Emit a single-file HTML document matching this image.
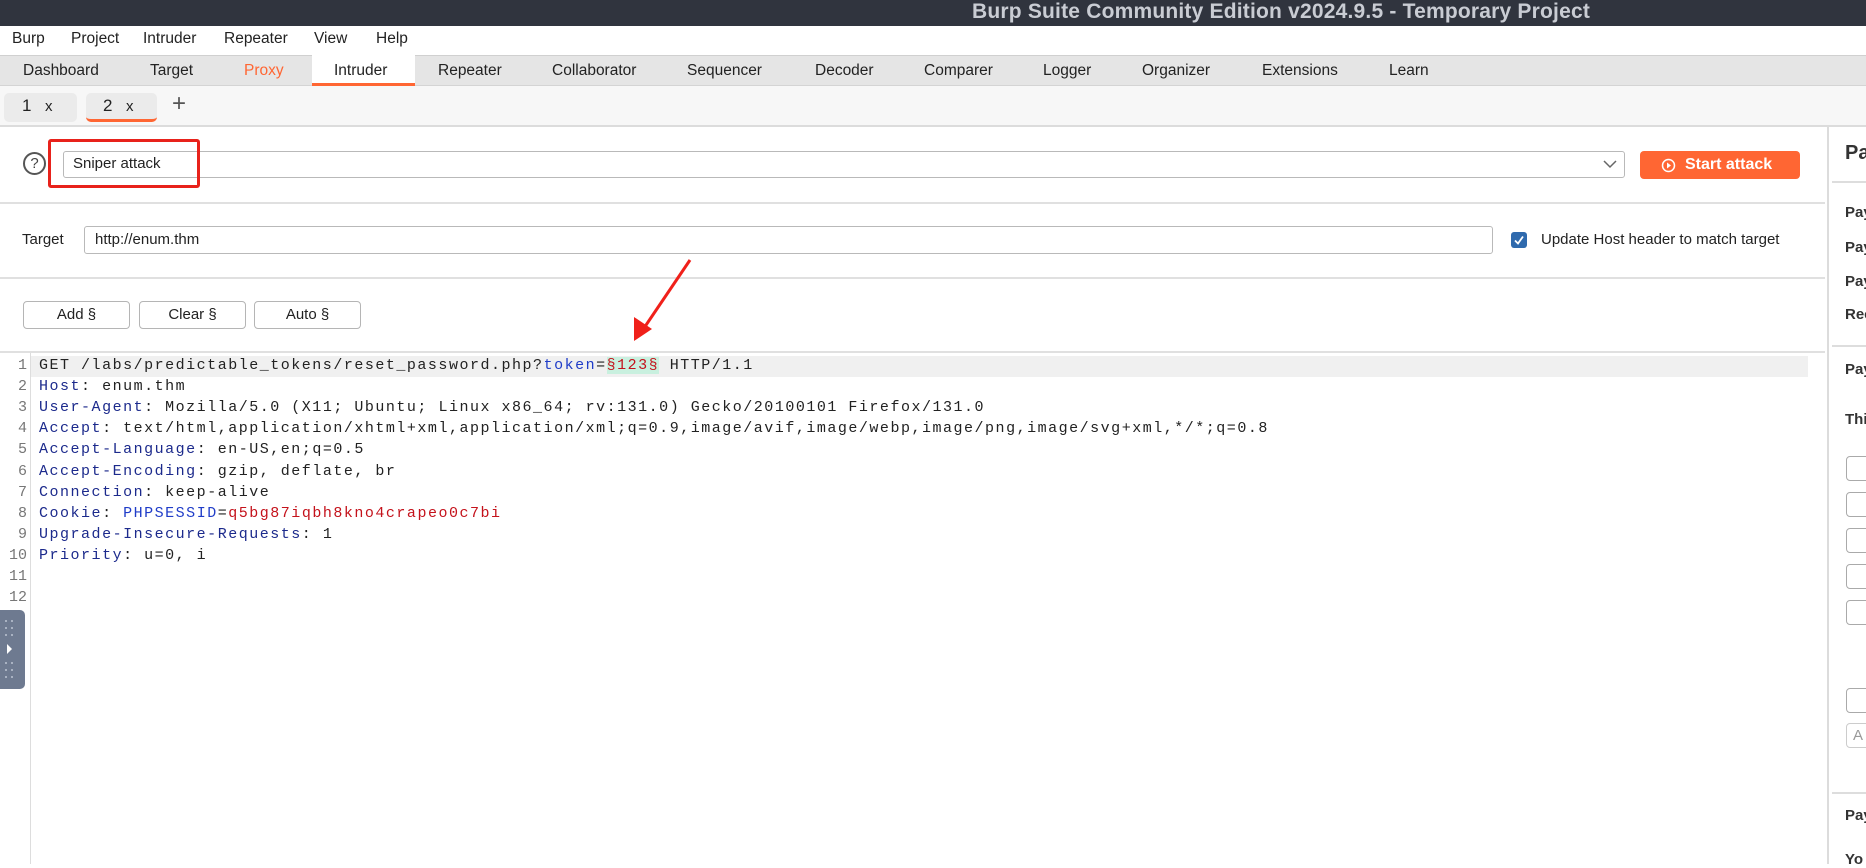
<!DOCTYPE html>
<html><head><meta charset="utf-8"><style>
*{margin:0;padding:0;box-sizing:border-box}
body{width:1866px;height:864px;position:relative;overflow:hidden;background:#fff;font-family:"Liberation Sans",sans-serif;color:#222;font-size:16px}
.a{position:absolute;white-space:nowrap}
.title{left:0;top:0;width:1866px;height:26px;background:#30343e}
.title span{position:absolute;left:972px;top:0;font-size:21px;font-weight:bold;color:#c9ccd3;line-height:23px;letter-spacing:0.2px}
.menu span{position:absolute;top:30px;font-size:15.5px}
.tabs{left:0;top:55px;width:1866px;height:31px;background:#e5e5e5;border-top:1px solid #d0d0d0;border-bottom:1px solid #d4d4d4}
.tabs span{position:absolute;top:6px;font-size:15.5px}
.sub{left:0;top:86px;width:1866px;height:41px;background:#f7f7f7;border-bottom:2px solid #dcdcdc}
.hr{height:2px;background:#e0e0e0}
.box{border:1px solid #b9b9b9;border-radius:3px;background:#fff}
.btn{border:1px solid #b5b5b5;border-radius:4px;background:#fff;text-align:center;line-height:26px;font-size:15px}
.code{left:0;top:355px;font-family:"Liberation Mono",monospace;font-size:15px;letter-spacing:1.51px;line-height:21.1px}
.ln{position:absolute;left:0;width:27px;text-align:right;color:#777;letter-spacing:0}
.tx{position:absolute;left:39px}
.k{color:#1c2a8c}.r{color:#c4121b}.b{color:#1f3cc8}
.rp span{position:absolute;left:1845px;font-size:15px;font-weight:bold;color:#333}
.rb{position:absolute;left:1846px;width:30px;height:25px;border:1px solid #aaa;border-radius:4px;background:#fff}
</style></head><body>
<div class="a title"><span>Burp Suite Community Edition v2024.9.5 - Temporary Project</span></div>
<div class="menu">
<span class="a" style="left:12px">Burp</span><span class="a" style="left:71px">Project</span><span class="a" style="left:143px">Intruder</span><span class="a" style="left:224px">Repeater</span><span class="a" style="left:314px">View</span><span class="a" style="left:376px">Help</span></div>
<div class="a tabs">
<div class="a" style="left:312px;top:-1px;width:103px;height:31px;background:#fff;border-bottom:3px solid #ff6633"></div>
<span style="left:23px">Dashboard</span><span style="left:150px">Target</span><span style="left:244px;color:#ff6633">Proxy</span><span style="left:334px">Intruder</span><span style="left:438px">Repeater</span><span style="left:552px">Collaborator</span><span style="left:687px">Sequencer</span><span style="left:815px">Decoder</span><span style="left:924px">Comparer</span><span style="left:1043px">Logger</span><span style="left:1142px">Organizer</span><span style="left:1262px">Extensions</span><span style="left:1389px">Learn</span></div>
<div class="a sub">
<div class="a" style="left:4px;top:7px;width:73px;height:29px;background:#ebebeb;border-radius:5px"></div>
<span class="a" style="left:22px;top:10px;font-size:17px">1</span><span class="a" style="left:45px;top:12px;font-size:15px">x</span>
<div class="a" style="left:86px;top:7px;width:71px;height:29px;background:#ebebeb;border-radius:5px;border-bottom:3px solid #ff6633"></div>
<span class="a" style="left:103px;top:10px;font-size:17px">2</span><span class="a" style="left:126px;top:12px;font-size:15px">x</span>
<span class="a" style="left:172px;top:4px;font-size:24px;color:#555">+</span></div>
<div class="a" style="left:1827px;top:127px;width:2px;height:737px;background:#dcdcdc"></div>
<div class="a" style="left:23px;top:152px;width:23px;height:23px;border:2px solid #555;border-radius:50%;text-align:center;font-size:15px;line-height:19px;color:#444">?</div>
<div class="a box" style="left:63px;top:151px;width:1562px;height:27px"></div>
<span class="a" style="left:73px;top:155px;font-size:15px">Sniper attack</span>
<svg class="a" style="left:1602px;top:157px" width="16" height="14"><path d="M2 4 L8 10 L14 4" fill="none" stroke="#666" stroke-width="1.5"/></svg>
<div class="a" style="left:48px;top:139px;width:152px;height:49px;border:3px solid #e8221b;border-radius:3px"></div>
<div class="a" style="left:1640px;top:151px;width:160px;height:28px;background:#ff6633;border-radius:4px;color:#fff;font-weight:bold;font-size:16px;line-height:28px;padding-left:45px">Start attack</div>
<svg class="a" style="left:1661px;top:158px" width="15" height="15"><circle cx="7.5" cy="7.5" r="6" fill="none" stroke="#fff" stroke-width="1.5"/><path d="M6 4.5 L10 7.5 L6 10.5Z" fill="#fff"/></svg>
<div class="a hr" style="left:0;top:202px;width:1825px"></div>
<span class="a" style="left:22px;top:231px;font-size:15px">Target</span>
<div class="a box" style="left:84px;top:226px;width:1409px;height:28px"></div>
<span class="a" style="left:95px;top:231px;font-size:15px">http://enum.thm</span>
<div class="a" style="left:1511px;top:232px;width:16px;height:16px;background:#2f6aad;border-radius:3px"></div>
<svg class="a" style="left:1511px;top:232px" width="16" height="16"><path d="M4 8.5 L7 11.5 L12 4.5" fill="none" stroke="#fff" stroke-width="1.8"/></svg>
<span class="a" style="left:1541px;top:231px;font-size:15px">Update Host header to match target</span>
<div class="a hr" style="left:0;top:277px;width:1825px"></div>
<div class="a btn" style="left:23px;top:301px;width:107px;height:28px">Add §</div>
<div class="a btn" style="left:139px;top:301px;width:107px;height:28px">Clear §</div>
<div class="a btn" style="left:254px;top:301px;width:107px;height:28px">Auto §</div>
<svg class="a" style="left:620px;top:255px" width="80" height="90"><path d="M70 5 L22 76" stroke="#f0201a" stroke-width="3"/><path d="M14 86 L14 62 L32 74Z" fill="#f0201a"/></svg>
<div class="a hr" style="left:0;top:351px;width:1825px"></div>
<div class="a" style="left:30px;top:353px;width:1px;height:511px;background:#ddd"></div>
<div class="a" style="left:31px;top:356px;width:1777px;height:21px;background:#f0f0f0"></div>
<div class="a code">
<div class="ln" style="top:0">1</div><div class="tx" style="top:0">GET /labs/predictable_tokens/reset_password.php?<span class="b">token</span>=<span class="r" style="background:#c9f0df">§123§</span> HTTP/1.1</div>
<div class="ln" style="top:21.1px">2</div><div class="tx" style="top:21.1px"><span class="k">Host</span>: enum.thm</div>
<div class="ln" style="top:42.2px">3</div><div class="tx" style="top:42.2px"><span class="k">User-Agent</span>: Mozilla/5.0 (X11; Ubuntu; Linux x86_64; rv:131.0) Gecko/20100101 Firefox/131.0</div>
<div class="ln" style="top:63.3px">4</div><div class="tx" style="top:63.3px"><span class="k">Accept</span>: text/html,application/xhtml+xml,application/xml;q=0.9,image/avif,image/webp,image/png,image/svg+xml,*/*;q=0.8</div>
<div class="ln" style="top:84.4px">5</div><div class="tx" style="top:84.4px"><span class="k">Accept-Language</span>: en-US,en;q=0.5</div>
<div class="ln" style="top:105.5px">6</div><div class="tx" style="top:105.5px"><span class="k">Accept-Encoding</span>: gzip, deflate, br</div>
<div class="ln" style="top:126.6px">7</div><div class="tx" style="top:126.6px"><span class="k">Connection</span>: keep-alive</div>
<div class="ln" style="top:147.7px">8</div><div class="tx" style="top:147.7px"><span class="k">Cookie</span>: <span class="b">PHPSESSID</span>=<span class="r">q5bg87iqbh8kno4crapeo0c7bi</span></div>
<div class="ln" style="top:168.8px">9</div><div class="tx" style="top:168.8px"><span class="k">Upgrade-Insecure-Requests</span>: 1</div>
<div class="ln" style="top:189.9px">10</div><div class="tx" style="top:189.9px"><span class="k">Priority</span>: u=0, i</div>
<div class="ln" style="top:211px">11</div>
<div class="ln" style="top:232.1px">12</div>
</div>
<div class="a" style="left:0;top:610px;width:25px;height:79px;background:#6e7a90;border-radius:0 5px 5px 0"></div>
<svg class="a" style="left:0;top:610px" width="25" height="79"><g fill="#a9b2c2"><rect x="5" y="10" width="2" height="2"/><rect x="11" y="10" width="2" height="2"/><rect x="5" y="17" width="2" height="2"/><rect x="11" y="17" width="2" height="2"/><rect x="5" y="24" width="2" height="2"/><rect x="11" y="24" width="2" height="2"/><rect x="5" y="52" width="2" height="2"/><rect x="11" y="52" width="2" height="2"/><rect x="5" y="59" width="2" height="2"/><rect x="11" y="59" width="2" height="2"/><rect x="5" y="66" width="2" height="2"/><rect x="11" y="66" width="2" height="2"/></g><path d="M7 34 L12 39 L7 44Z" fill="#fff"/></svg>
<div class="rp">
<span style="top:142px;font-size:20px">Pa</span>
<div class="a" style="left:1832px;top:181px;width:34px;height:2px;background:#ddd"></div>
<span style="top:204px">Pay</span><span style="top:239px">Pay</span><span style="top:273px">Pay</span><span style="top:306px">Rec</span>
<div class="a" style="left:1832px;top:345px;width:34px;height:2px;background:#ddd"></div>
<span style="top:361px">Pay</span><span style="top:411px">Thi</span>
<div class="rb" style="top:456px"></div><div class="rb" style="top:492px"></div><div class="rb" style="top:528px"></div><div class="rb" style="top:564px"></div><div class="rb" style="top:600px"></div>
<div class="rb" style="top:688px"></div>
<div class="rb" style="top:723px;border-color:#ccc"></div><span style="top:727px;left:1853px;color:#999;font-weight:normal">A</span>
<div class="a" style="left:1832px;top:792px;width:34px;height:2px;background:#ddd"></div>
<span style="top:807px">Pay</span><span style="top:851px">Yo</span>
</div>
</body></html>
